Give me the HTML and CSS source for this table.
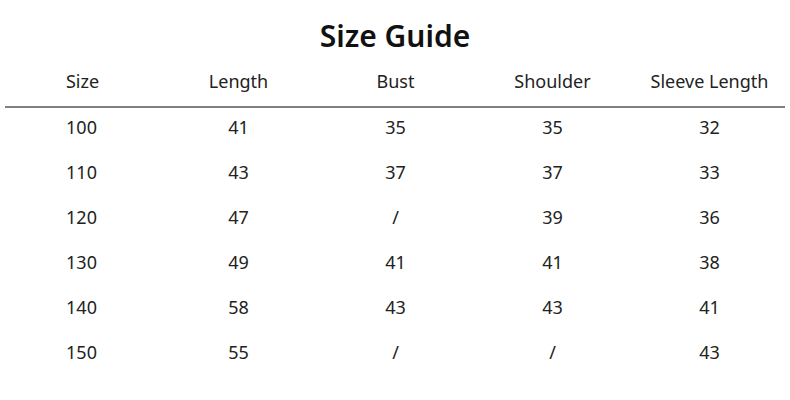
FILE: index.html
```html
<!DOCTYPE html>
<html>
<head>
<meta charset="utf-8">
<link rel="stylesheet" href="styles.css">
</head>
<body>
<div class="page">
  <h1 class="title">Size Guide</h1>
  <div class="table">
    <div class="row head">
      <div>Size</div><div>Length</div><div>Bust</div><div>Shoulder</div><div>Sleeve Length</div>
    </div>
    <div class="row"><div>100</div><div>41</div><div>35</div><div>35</div><div>32</div></div>
    <div class="row"><div>110</div><div>43</div><div>37</div><div>37</div><div>33</div></div>
    <div class="row"><div>120</div><div>47</div><div>/</div><div>39</div><div>36</div></div>
    <div class="row"><div>130</div><div>49</div><div>41</div><div>41</div><div>38</div></div>
    <div class="row"><div>140</div><div>58</div><div>43</div><div>43</div><div>41</div></div>
    <div class="row"><div>150</div><div>55</div><div>/</div><div>/</div><div>43</div></div>
  </div>
</div>
</body>
</html>
```
FILE: styles.css
```css
html, body {
  margin: 0;
  padding: 0;
  background: #fff;
}
.page {
  width: 790px;
  height: 400px;
  font-family: "Noto Sans", "Open Sans", sans-serif;
  color: #222;
}
.title {
  margin: 16px 0 0;
  height: 40px;
  line-height: 40px;
  font-size: 30px;
  font-weight: 600;
  text-align: center;
  color: #111;
}
.table {
  margin-left: 3px;
  width: 785px;
}
.row {
  display: grid;
  grid-template-columns: repeat(5, 157px);
  height: 45px;
  align-items: center;
  box-sizing: border-box;
  padding-bottom: 7px;
  font-size: 18px;
}
.row > div {
  text-align: center;
}
.head {
  height: 52px;
  padding-bottom: 0;
  border-bottom: 2px solid #808080;
  margin-left: 2px;
  width: 780px;
  grid-template-columns: 155px repeat(4, 157px);
}
```
